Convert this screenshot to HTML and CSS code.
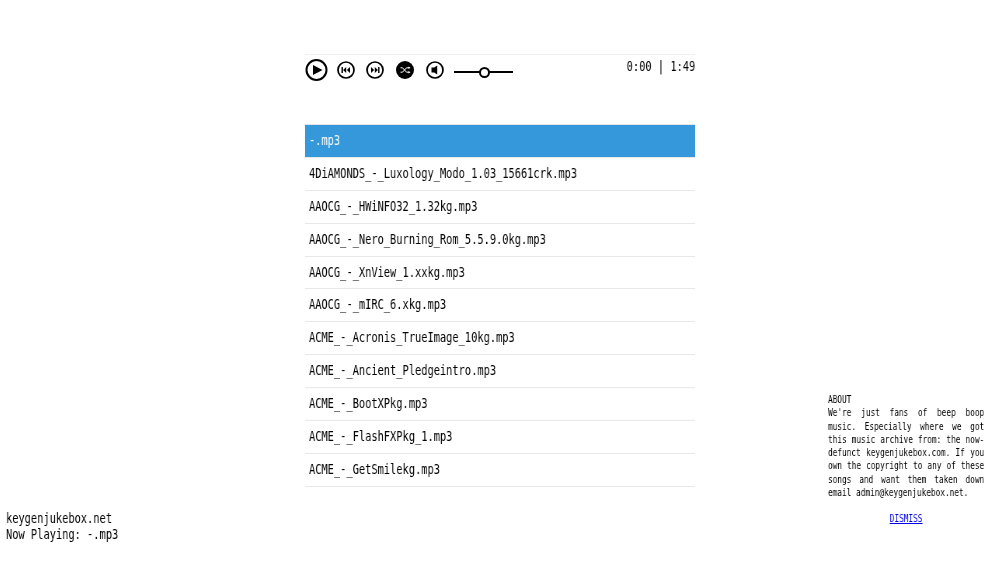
FILE: index.html
```html
<!DOCTYPE html>
<html lang="en">
<head>
    <meta charset="UTF-8">
    <title>keygenjukebox</title>
    <link rel="stylesheet" href="styles.css">
</head>
<body>
    <div class="player">
        <div class="controls">
            <svg class="btn-play" width="23" height="24" viewBox="0 0 23 24"><circle cx="11.5" cy="12" r="10" fill="none" stroke="#000" stroke-width="2"/><path d="M8 7l9.5 5-9.5 5z"/></svg>
            <svg class="btn" width="18" height="18" viewBox="0 0 18 18"><circle cx="9" cy="9" r="8" fill="none" stroke="#000" stroke-width="1.7"/><path d="M4.5 6h1.4v6H4.500zM9.200 6v6L6.100 9zM13 6v6L9.900 9z"/></svg>
            <svg class="btn" width="18" height="18" viewBox="0 0 18 18"><circle cx="9" cy="9" r="8" fill="none" stroke="#000" stroke-width="1.7"/><path d="M5 6v6L8.100 9zM8.800 6v6L11.900 9zM12.100 6h1.400v6h-1.400z"/></svg>
            <svg class="btn" width="18" height="18" viewBox="0 0 18 18"><circle cx="9" cy="9" r="9"/><path d="M4.500 6.800h2l4 4.400h2.500M4.500 11.200h2l4-4.400h2.500" fill="none" stroke="#fff" stroke-width="1"/><path d="M12.500 5.500l2 1.300-2 1.300zM12.500 9.900l2 1.300-2 1.300z" fill="#fff"/></svg>
            <svg class="btn" width="18" height="18" viewBox="0 0 18 18"><circle cx="9" cy="9" r="8" fill="none" stroke="#000" stroke-width="1.7"/><path d="M5.500 6.600h2.700l3-2.200v9.200l-3-2.200H5.500z"/></svg>
            <div class="slider"><span class="knob"></span></div>
            <div class="time narrow">0:00 | 1:49</div>
        </div>
        <ul class="tracks">
            <li class="current"><span class="narrow">-.mp3</span></li>
            <li><span class="narrow">4DiAMONDS_-_Luxology_Modo_1.03_15661crk.mp3</span></li>
            <li><span class="narrow">AAOCG_-_HWiNFO32_1.32kg.mp3</span></li>
            <li><span class="narrow">AAOCG_-_Nero_Burning_Rom_5.5.9.0kg.mp3</span></li>
            <li><span class="narrow">AAOCG_-_XnView_1.xxkg.mp3</span></li>
            <li><span class="narrow">AAOCG_-_mIRC_6.xkg.mp3</span></li>
            <li><span class="narrow">ACME_-_Acronis_TrueImage_10kg.mp3</span></li>
            <li><span class="narrow">ACME_-_Ancient_Pledgeintro.mp3</span></li>
            <li><span class="narrow">ACME_-_BootXPkg.mp3</span></li>
            <li><span class="narrow">ACME_-_FlashFXPkg_1.mp3</span></li>
            <li><span class="narrow">ACME_-_GetSmilekg.mp3</span></li>
        </ul>
    </div>

    <div class="status narrow">
        <div>keygenjukebox.net</div>
        <div>Now Playing: -.mp3</div>
    </div>

    <div class="about narrow">
        <div>ABOUT</div>
        <p>We're just fans of beep boop music. Especially where we got this music archive from: the now-defunct keygenjukebox.com. If you own the copyright to any of these songs and want them taken down email admin@keygenjukebox.net.</p>
        <a href="#" class="dismiss">DISMISS</a>
    </div>
</body>
</html>
```
FILE: styles.css
```css
body {
    margin: 0;
    background: white;
    color: #000;
    font-family: "DejaVu Sans Mono", monospace;
    font-size: 13.33px;
}
/* the mono font is wider than the original, squeeze it */
.narrow {
    display: inline-block;
    transform: scaleX(0.777);
    transform-origin: left top;
    will-change: transform;
}
.player {
    width: 390px;
    margin: 54px auto 0;
    border-top: 1px solid #eee;
}
.controls {
    display: flex;
    align-items: flex-start;
    height: 69px;
}
.btn-play {
    margin-top: 3px;
    margin-right: 8.7px;
}
.btn {
    margin-top: 6px;
    margin-right: 11.7px;
}
.slider {
    position: relative;
    width: 59px;
    height: 2px;
    margin-top: 16px;
    margin-left: -1px;
    background: #000;
}
.knob {
    position: absolute;
    left: 25px;
    top: -4.5px;
    width: 7px;
    height: 7px;
    background: white;
    border: 2px solid #000;
    border-radius: 50%;
}
.time {
    margin-left: auto;
    margin-top: 4px;
    transform-origin: right top;
}
.tracks {
    list-style: none;
    margin: 0;
    padding: 0;
    border-top: 1px solid #e4e4e4;
}
.tracks li {
    height: 31.9px;
    line-height: 31px;
    padding-left: 4px;
    border-bottom: 1px solid #e8e8e8;
}
.tracks li.current {
    background: #3498db;
    color: white;
}
.status {
    position: fixed;
    left: 6px;
    top: 511px;
    line-height: 16px;
}
.about {
    position: fixed;
    left: 828px;
    top: 393px;
    width: 201px;
    font-size: 10px;
    line-height: 13.3px;
}
.about p {
    margin: 0 0 13px;
    text-align: justify;
}
.dismiss {
    display: block;
    text-align: center;
    color: #00e;
}
```
